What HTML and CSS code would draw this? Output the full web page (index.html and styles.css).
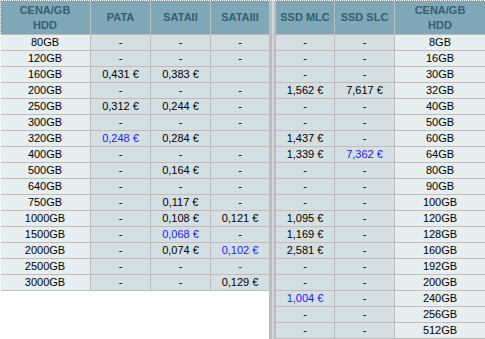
FILE: index.html
```html
<!DOCTYPE html>
<html lang="cs">
<head>
<meta charset="utf-8">
<title>Cena za GB</title>
<link rel="stylesheet" href="styles.css">
</head>
<body>
<div class="wrap">
  <div class="grid left">
    <div class="h">CENA/GB<br>HDD</div>
    <div class="h">PATA</div>
    <div class="h">SATAII</div>
    <div class="h last">SATAIII</div>

    <div class="k">80GB</div><div class="v">-</div><div class="v">-</div><div class="v last">-</div>
    <div class="k">120GB</div><div class="v">-</div><div class="v">-</div><div class="v last">-</div>
    <div class="k">160GB</div><div class="v">0,431 €</div><div class="v">0,383 €</div><div class="v last"></div>
    <div class="k">200GB</div><div class="v">-</div><div class="v">-</div><div class="v last">-</div>
    <div class="k">250GB</div><div class="v">0,312 €</div><div class="v">0,244 €</div><div class="v last">-</div>
    <div class="k">300GB</div><div class="v">-</div><div class="v">-</div><div class="v last">-</div>
    <div class="k">320GB</div><div class="v best">0,248 €</div><div class="v">0,284 €</div><div class="v last"></div>
    <div class="k">400GB</div><div class="v">-</div><div class="v">-</div><div class="v last">-</div>
    <div class="k">500GB</div><div class="v">-</div><div class="v">0,164 €</div><div class="v last">-</div>
    <div class="k">640GB</div><div class="v">-</div><div class="v">-</div><div class="v last">-</div>
    <div class="k">750GB</div><div class="v">-</div><div class="v">0,117 €</div><div class="v last">-</div>
    <div class="k">1000GB</div><div class="v">-</div><div class="v">0,108 €</div><div class="v last">0,121 €</div>
    <div class="k">1500GB</div><div class="v">-</div><div class="v best">0,068 €</div><div class="v last">-</div>
    <div class="k">2000GB</div><div class="v">-</div><div class="v">0,074 €</div><div class="v last best">0,102 €</div>
    <div class="k">2500GB</div><div class="v">-</div><div class="v">-</div><div class="v last best">-</div>
    <div class="k">3000GB</div><div class="v">-</div><div class="v">-</div><div class="v last">0,129 €</div>
  </div>

  <div class="sep"></div>

  <div class="grid right">
    <div class="h">SSD MLC</div>
    <div class="h">SSD SLC</div>
    <div class="h last">CENA/GB<br>HDD</div>

    <div class="v">-</div><div class="v">-</div><div class="k last">8GB</div>
    <div class="v">-</div><div class="v">-</div><div class="k last">16GB</div>
    <div class="v">-</div><div class="v">-</div><div class="k last">30GB</div>
    <div class="v">1,562 €</div><div class="v">7,617 €</div><div class="k last">32GB</div>
    <div class="v">-</div><div class="v">-</div><div class="k last">40GB</div>
    <div class="v">-</div><div class="v">-</div><div class="k last">50GB</div>
    <div class="v">1,437 €</div><div class="v">-</div><div class="k last">60GB</div>
    <div class="v">1,339 €</div><div class="v best">7,362 €</div><div class="k last">64GB</div>
    <div class="v">-</div><div class="v">-</div><div class="k last">80GB</div>
    <div class="v">-</div><div class="v">-</div><div class="k last">90GB</div>
    <div class="v">-</div><div class="v">-</div><div class="k last">100GB</div>
    <div class="v">1,095 €</div><div class="v">-</div><div class="k last">120GB</div>
    <div class="v">1,169 €</div><div class="v">-</div><div class="k last">128GB</div>
    <div class="v">2,581 €</div><div class="v">-</div><div class="k last">160GB</div>
    <div class="v">-</div><div class="v">-</div><div class="k last">192GB</div>
    <div class="v">-</div><div class="v">-</div><div class="k last">200GB</div>
    <div class="v best">1,004 €</div><div class="v">-</div><div class="k last">240GB</div>
    <div class="v">-</div><div class="v">-</div><div class="k last">256GB</div>
    <div class="v">-</div><div class="v">-</div><div class="k last">512GB</div>
  </div>
</div>
</body>
</html>
```

FILE: styles.css
```css
html, body {
  margin: 0;
  padding: 0;
  background: #ffffff;
}

.wrap {
  position: relative;
  display: flex;
  align-items: flex-start;
  width: 485px;
  font-family: "Liberation Sans", Arial, sans-serif;
  font-size: 11px;
  color: #000;
}

.wrap::before {
  content: "";
  position: absolute;
  left: 0;
  top: 0;
  right: 0;
  height: 290px;
  border-top: 1px dotted #ffffff;
  border-left: 1px dotted #ffffff;
  pointer-events: none;
}

.grid {
  display: grid;
  grid-auto-rows: 16px;
}

.left {
  grid-template-columns: 91px 60px 60px 58px;
  grid-template-rows: 35px;
}

.right {
  grid-template-columns: 59px 60px 90px;
  grid-template-rows: 35px;
}

.sep {
  align-self: stretch;
  width: 2px;
  height: 339px;
  background: #d6d6d6;
  border-left: 3px solid #bdbdbd;
  border-right: 2px solid #bdbdbd;
}

.h, .k, .v {
  border-right: 1px solid #bdbdbd;
  border-bottom: 1px solid #bdbdbd;
  text-align: center;
}

.last {
  border-right: 0;
}

.h {
  display: flex;
  align-items: center;
  justify-content: center;
  padding-top: 1px;
  background: #7ea8b7;
  color: #365f70;
  font-weight: bold;
  font-size: 11px;
  line-height: 15px;
}

.k, .v {
  line-height: 15px;
  white-space: nowrap;
}

.k {
  background: #e7eef0;
}

.v {
  background: #d3dfe3;
}

.best {
  color: #1a1aff;
}
```
